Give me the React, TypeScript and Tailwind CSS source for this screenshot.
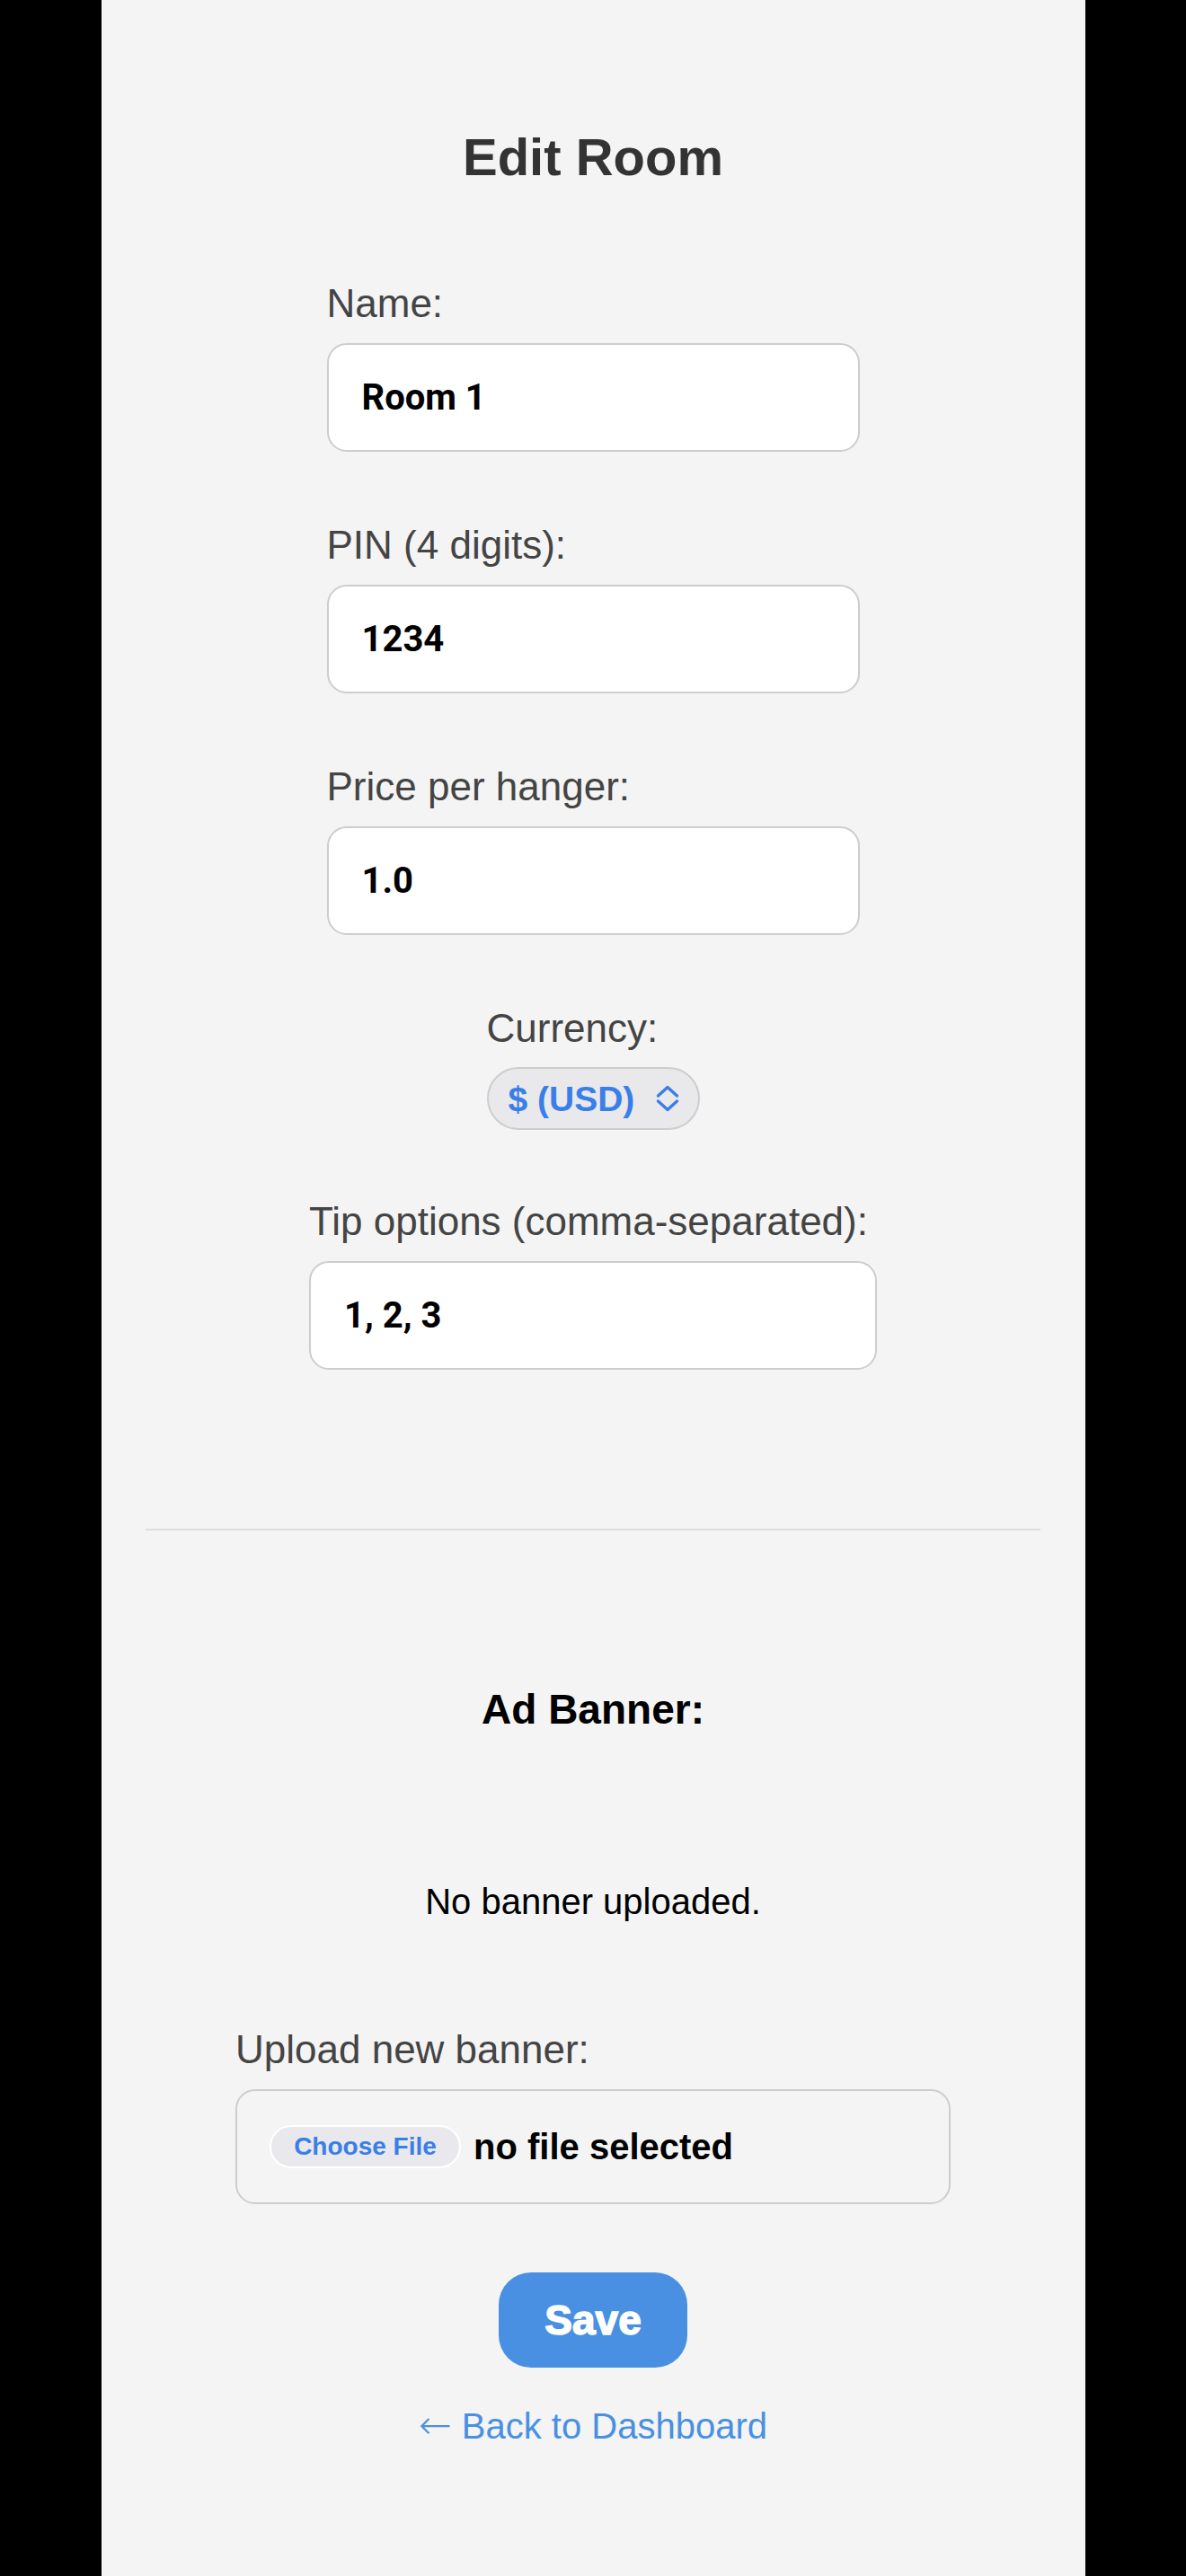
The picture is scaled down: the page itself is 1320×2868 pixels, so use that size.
import React from "react";

const LABEL = "block text-[44px] leading-[50px] text-[#444] font-['Liberation_Sans',Arial,sans-serif]";
const INPUT =
  "block w-full h-[121px] mt-[19px] rounded-[22px] border-2 border-[#cdcdcd] bg-white px-[37px] text-[40px] font-bold text-black outline-none font-['Roboto','Liberation_Sans',sans-serif]";

function Field({ label, value, width }: { label: string; value: string; width: string }) {
  return (
    <div className={width}>
      <label className={LABEL}>{label}</label>
      <input className={INPUT} defaultValue={value} readOnly />
    </div>
  );
}

export default function App() {
  return (
    <div className="min-h-[2868px] w-full bg-black">
      <div className="mx-auto flex min-h-[2868px] w-[1095px] flex-col items-center bg-[#f4f4f4] pt-[141px] font-['Liberation_Sans',Arial,sans-serif]">
        <h1 className="text-[58px] font-bold leading-[67px] text-[#333]">Edit Room</h1>

        <div className="mt-[105px]">
          <Field label="Name:" value="Room 1" width="w-[593px]" />
        </div>
        <div className="mt-[79px]">
          <Field label="PIN (4 digits):" value="1234" width="w-[593px]" />
        </div>
        <div className="mt-[79px]">
          <Field label="Price per hanger:" value="1.0" width="w-[593px]" />
        </div>

        <div className="mt-[79px] w-[237px]">
          <label className={LABEL}>Currency:</label>
          <div className="mt-[18px] flex h-[70px] w-[237px] items-center rounded-full border-2 border-[#cdcdcd] bg-[#e9e9ec] pl-[22px]">
            <span className="text-[39px] font-bold leading-none text-[#3a7ee8]">$ (USD)</span>
            <svg className="ml-[24px]" width="26" height="30" viewBox="0 0 26 30" fill="none">
              <path d="M2.5 12 L13 2.5 L23.5 12" stroke="#3a7ee8" strokeWidth="3.4" strokeLinecap="round" strokeLinejoin="round" />
              <path d="M2.5 18 L13 27.5 L23.5 18" stroke="#3a7ee8" strokeWidth="3.4" strokeLinecap="round" strokeLinejoin="round" />
            </svg>
          </div>
        </div>

        <div className="mt-[77px]">
          <Field label="Tip options (comma-separated):" value="1, 2, 3" width="w-[632px]" />
        </div>

        <div className="mt-[177px] h-[2px] w-[996px] bg-[#dddddd]" />

        <h3 className="mt-[173px] text-[46px] font-bold leading-[53px] text-black">Ad Banner:</h3>

        <p className="mt-[164px] text-[40px] leading-[46px] text-black">No banner uploaded.</p>

        <div className="mt-[117px] w-[796px]">
          <label className={LABEL}>Upload new banner:</label>
          <div className="mt-[19px] flex h-[128px] w-full items-center rounded-[22px] border-2 border-[#cdcdcd] pl-[36px]">
            <span className="flex h-[48px] w-[213px] items-center justify-center rounded-full border-2 border-white bg-[#e9e9ed] text-[28px] font-bold text-[#3a7ee8]">
              Choose File
            </span>
            <span className="ml-[14px] text-[40px] font-bold leading-none text-black">no file selected</span>
          </div>
        </div>

        <button className="mt-[76px] flex h-[106px] w-[210px] items-center justify-center rounded-[36px] bg-[#4a90e2] text-[46px] font-black text-white [-webkit-text-stroke:1.5px_white]">
          Save
        </button>

        <a className="mt-[41px] flex items-baseline text-[40px] leading-[46px] text-[#4a90e2]" href="#">
          <span className="mr-[11px] font-['DejaVu_Sans',sans-serif] text-[44px] font-light">←</span>
          <span>Back to Dashboard</span>
        </a>
      </div>
    </div>
  );
}
